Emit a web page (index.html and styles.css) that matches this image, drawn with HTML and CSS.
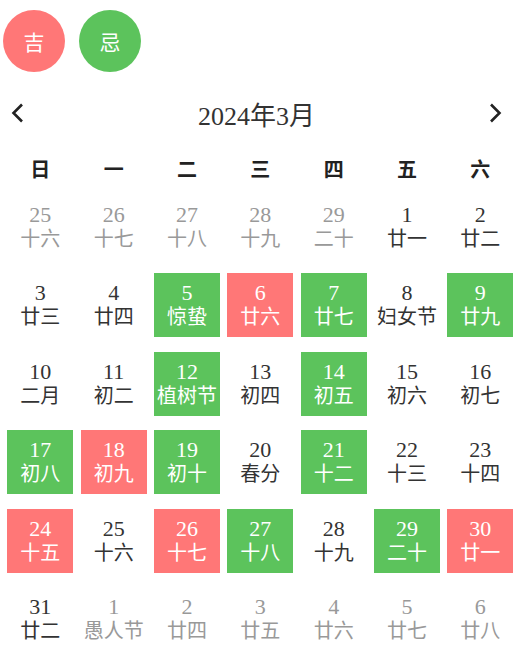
FILE: index.html
```html
<!DOCTYPE html>
<html lang="zh">
<head>
<meta charset="utf-8">
<link rel="stylesheet" href="styles.css">
</head>
<body>
<div class="page">
  <div class="tags">
    <div class="tag tag-good">吉</div>
    <div class="tag tag-bad">忌</div>
  </div>
  <div class="header">
    <svg class="arrow" width="14" height="20" viewBox="0 0 14 20"><path d="M11 1.5 L2.5 10 L11 18.5" fill="none" stroke="#222" stroke-width="2.6"/></svg>
    <div class="title">2024年3月</div>
    <svg class="arrow" width="14" height="20" viewBox="0 0 14 20"><path d="M3 1.5 L11.5 10 L3 18.5" fill="none" stroke="#222" stroke-width="2.6"/></svg>
  </div>
  <div class="weekdays">
    <div>日</div><div>一</div><div>二</div><div>三</div><div>四</div><div>五</div><div>六</div>
  </div>
  <div class="grid">
    <div class="cell other"><span class="num">25</span><span>十六</span></div>
    <div class="cell other"><span class="num">26</span><span>十七</span></div>
    <div class="cell other"><span class="num">27</span><span>十八</span></div>
    <div class="cell other"><span class="num">28</span><span>十九</span></div>
    <div class="cell other"><span class="num">29</span><span>二十</span></div>
    <div class="cell"><span class="num">1</span><span>廿一</span></div>
    <div class="cell"><span class="num">2</span><span>廿二</span></div>

    <div class="cell"><span class="num">3</span><span>廿三</span></div>
    <div class="cell"><span class="num">4</span><span>廿四</span></div>
    <div class="cell ji"><span class="num">5</span><span>惊蛰</span></div>
    <div class="cell red"><span class="num">6</span><span>廿六</span></div>
    <div class="cell ji"><span class="num">7</span><span>廿七</span></div>
    <div class="cell"><span class="num">8</span><span>妇女节</span></div>
    <div class="cell ji"><span class="num">9</span><span>廿九</span></div>

    <div class="cell"><span class="num">10</span><span>二月</span></div>
    <div class="cell"><span class="num">11</span><span>初二</span></div>
    <div class="cell ji"><span class="num">12</span><span>植树节</span></div>
    <div class="cell"><span class="num">13</span><span>初四</span></div>
    <div class="cell ji"><span class="num">14</span><span>初五</span></div>
    <div class="cell"><span class="num">15</span><span>初六</span></div>
    <div class="cell"><span class="num">16</span><span>初七</span></div>

    <div class="cell ji"><span class="num">17</span><span>初八</span></div>
    <div class="cell red"><span class="num">18</span><span>初九</span></div>
    <div class="cell ji"><span class="num">19</span><span>初十</span></div>
    <div class="cell"><span class="num">20</span><span>春分</span></div>
    <div class="cell ji"><span class="num">21</span><span>十二</span></div>
    <div class="cell"><span class="num">22</span><span>十三</span></div>
    <div class="cell"><span class="num">23</span><span>十四</span></div>

    <div class="cell red"><span class="num">24</span><span>十五</span></div>
    <div class="cell"><span class="num">25</span><span>十六</span></div>
    <div class="cell red"><span class="num">26</span><span>十七</span></div>
    <div class="cell ji"><span class="num">27</span><span>十八</span></div>
    <div class="cell"><span class="num">28</span><span>十九</span></div>
    <div class="cell ji"><span class="num">29</span><span>二十</span></div>
    <div class="cell red"><span class="num">30</span><span>廿一</span></div>

    <div class="cell"><span class="num">31</span><span>廿二</span></div>
    <div class="cell other"><span class="num">1</span><span>愚人节</span></div>
    <div class="cell other"><span class="num">2</span><span>廿四</span></div>
    <div class="cell other"><span class="num">3</span><span>廿五</span></div>
    <div class="cell other"><span class="num">4</span><span>廿六</span></div>
    <div class="cell other"><span class="num">5</span><span>廿七</span></div>
    <div class="cell other"><span class="num">6</span><span>廿八</span></div>
  </div>
</div>
</body>
</html>
```

FILE: styles.css
```css
html, body {
  margin: 0;
  padding: 0;
  background: #fff;
}
body {
  font-family: "Liberation Serif", "Noto Sans CJK SC", serif;
  color: #333;
}
.page {
  width: 513px;
}
.tags {
  display: flex;
  gap: 14px;
  padding: 10px 0 0 3px;
}
.tag {
  width: 62px;
  height: 62px;
  border-radius: 50%;
  color: #fff;
  font-size: 21px;
  display: flex;
  align-items: center;
  justify-content: center;
}
.tag-good { background: #ff7777; }
.tag-bad { background: #5cc35c; }
.header {
  margin-top: 21px;
  height: 40px;
  display: flex;
  align-items: center;
  justify-content: space-between;
  padding: 0 11px 0 11px;
}
.title {
  font-size: 26px;
  color: #333;
}
.arrow { display: block; }
.weekdays {
  margin-top: 15px;
  height: 40px;
  display: grid;
  grid-template-columns: repeat(7, 66px);
  column-gap: 7.33px;
  padding-left: 7.33px;
  align-items: center;
  justify-items: center;
  font-size: 20px;
  font-weight: bold;
  color: #222;
}
.grid {
  display: grid;
  grid-template-columns: repeat(7, 66px);
  grid-auto-rows: 64px;
  column-gap: 7.33px;
  row-gap: 14.5px;
  padding: 6.5px 0 0 7.33px;
}
.cell {
  display: flex;
  flex-direction: column;
  align-items: center;
  justify-content: center;
  font-size: 20px;
  line-height: 25px;
  color: #333;
}
.cell .num {
  font-size: 22px;
}
.cell.other { color: #999; }
.cell.ji { background: #5cc35c; color: #fff; }
.cell.red { background: #ff7777; color: #fff; }
```
